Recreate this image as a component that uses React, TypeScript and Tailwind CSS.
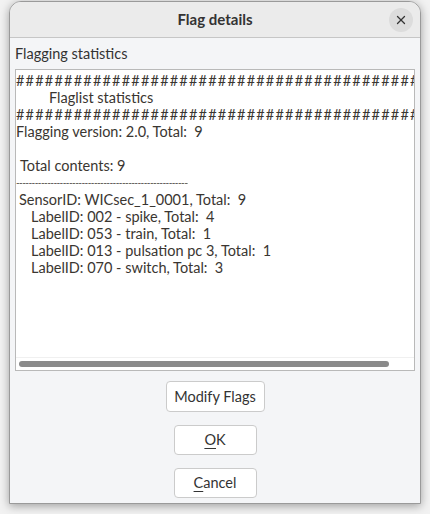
import React from 'react';
import { X } from 'lucide-react';

const font = { fontFamily: '"Lato", "Noto Sans", sans-serif' };

const hashes = '#'.repeat(50);
const dashes = '-'.repeat(60);

const lines: { text: string; pad: string }[] = [
  { text: 'SensorID: WICsec_1_0001, Total:  9', pad: 'pl-[3px]' },
  { text: 'LabelID: 002 - spike, Total:  4', pad: 'pl-[15px]' },
  { text: 'LabelID: 053 - train, Total:  1', pad: 'pl-[15px]' },
  { text: 'LabelID: 013 - pulsation pc 3, Total:  1', pad: 'pl-[15px]' },
  { text: 'LabelID: 070 - switch, Total:  3', pad: 'pl-[15px]' },
];

export default function App() {
  return (
    <div className="w-[430px] h-[514px] bg-[#f2f2f2] pl-[9px] pt-[1px] overflow-hidden" style={font}>
      <div className="w-[412px] h-[503px] flex flex-col bg-[#f4f5f7] rounded-t-[12px] border border-[#9a9a9a] shadow-[0_2px_10px_rgba(0,0,0,0.35)] overflow-hidden text-[#333]">
        {/* Title bar */}
        <div className="relative h-[36px] shrink-0 flex items-center justify-center bg-[#ebebeb] border-b border-[#c6c6c6]">
          <span className="text-[15px] font-bold text-[#333]">Flag details</span>
          <button className="absolute right-[7px] top-[6px] w-[24px] h-[24px] rounded-full bg-[#dcdcdc] flex items-center justify-center">
            <X size={14} strokeWidth={2.2} className="text-[#333]" />
          </button>
        </div>

        {/* Body */}
        <div className="flex flex-col flex-1 px-[5px]">
          <div className="h-[31px] flex items-center text-[14.5px]">Flagging statistics</div>

          <div className="h-[302px] flex flex-col bg-white border border-[#b9b9b9]">
            <div className="flex-1 pt-[2px] overflow-hidden text-[14.5px] leading-[17px] whitespace-pre text-[#3a3631]">
              <div className="overflow-hidden tracking-[1.2px]">{hashes}</div>
              <div className="pl-[33px]">Flaglist statistics</div>
              <div className="overflow-hidden tracking-[1.2px]">{hashes}</div>
              <div>Flagging version: 2.0, Total:  9</div>
              <div>{' '}</div>
              <div className="pl-[4px]">Total contents: 9</div>
              <div className="w-[172px] overflow-hidden text-[10px] tracking-[-0.6px]">{dashes}</div>
              {lines.map((l) => (
                <div key={l.text} className={l.pad}>{l.text}</div>
              ))}
            </div>
            <div className="h-[13px] shrink-0 border-t border-[#f0f0f0] flex items-start pt-[3px] px-[3px]">
              <div className="w-[370px] h-[6px] rounded-full bg-[#8a8a8a]" />
            </div>
          </div>

          <div className="flex flex-col items-center pt-[10px] gap-[13px] text-[14.5px]">
            <button className="w-[99px] h-[31px] rounded-[4px] border border-[#cbcbcb] bg-white text-[#333]">
              Modify Flags
            </button>
            <button className="w-[83px] h-[30px] rounded-[4px] border border-[#cbcbcb] bg-white text-[#333]">
              <span className="underline underline-offset-[3px]">O</span>K
            </button>
            <button className="w-[83px] h-[30px] rounded-[4px] border border-[#cbcbcb] bg-white text-[#333]">
              <span className="underline underline-offset-[3px]">C</span>ancel
            </button>
          </div>
        </div>
      </div>
    </div>
  );
}
